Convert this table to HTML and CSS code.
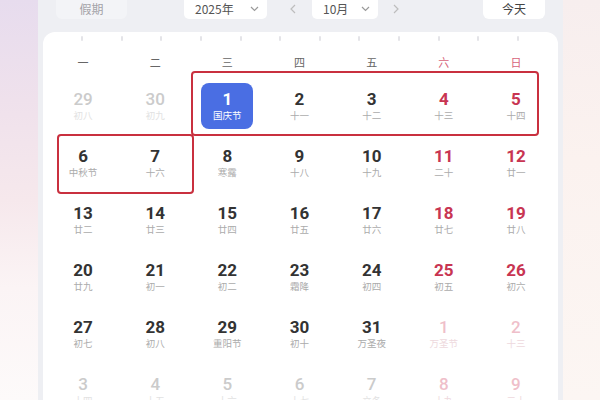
FILE: index.html
```html
<!DOCTYPE html>
<html lang="zh">
<head>
<meta charset="UTF-8">
<meta name="viewport" content="width=device-width, initial-scale=1.0">
<title>日历</title>
<link rel="stylesheet" href="styles.css">
</head>
<body>

<div class="page">
    <div class="side side-left"></div>

    <div class="panel">
        <div class="toolbar">
            <div class="tool-btn holiday">假期</div>
            <div class="select year-select">
                <span>2025年</span>
                <svg width="9" height="6" viewBox="0 0 9 6"><polyline points="1,1 4.5,4.5 8,1" fill="none" stroke="#9a9a9a" stroke-width="1.2"/></svg>
            </div>
            <div class="arrow arrow-prev">
                <svg width="6" height="10" viewBox="0 0 6 10"><polyline points="5,1 1,5 5,9" fill="none" stroke="#bdbdbd" stroke-width="1.2"/></svg>
            </div>
            <div class="select month-select">
                <span>10月</span>
                <svg width="9" height="6" viewBox="0 0 9 6"><polyline points="1,1 4.5,4.5 8,1" fill="none" stroke="#9a9a9a" stroke-width="1.2"/></svg>
            </div>
            <div class="arrow arrow-next">
                <svg width="6" height="10" viewBox="0 0 6 10"><polyline points="1,1 5,5 1,9" fill="none" stroke="#bdbdbd" stroke-width="1.2"/></svg>
            </div>
            <div class="tool-btn today">今天</div>
        </div>

        <div class="card">
            <div class="ticks" id="ticks"></div>
            <div class="week-head">
                <div>一</div>
                <div>二</div>
                <div>三</div>
                <div>四</div>
                <div>五</div>
                <div class="weekend">六</div>
                <div class="weekend">日</div>
            </div>
            <div class="days" id="days"></div>
        </div>
    </div>

    <div class="side side-right"></div>
</div>

<div class="mark mark-first"></div>
<div class="mark mark-second"></div>

<script>
    // [day, lunar, other month, holiday selected]
    let days = [
        [29, '初八', true], [30, '初九', true], [1, '国庆节', false, true], [2, '十一'], [3, '十二'], [4, '十三'], [5, '十四'],
        [6, '中秋节'], [7, '十六'], [8, '寒露'], [9, '十八'], [10, '十九'], [11, '二十'], [12, '廿一'],
        [13, '廿二'], [14, '廿三'], [15, '廿四'], [16, '廿五'], [17, '廿六'], [18, '廿七'], [19, '廿八'],
        [20, '廿九'], [21, '初一'], [22, '初二'], [23, '霜降'], [24, '初四'], [25, '初五'], [26, '初六'],
        [27, '初七'], [28, '初八'], [29, '重阳节'], [30, '初十'], [31, '万圣夜'], [1, '万圣节', true], [2, '十三', true],
        [3, '十四', true], [4, '十五', true], [5, '十六', true], [6, '十七', true], [7, '立冬', true], [8, '十九', true], [9, '二十', true]
    ];

    function show_days() {
        let box = document.getElementById('days');
        let html = '';
        for (let i = 0; i < days.length; i++) {
            let d = days[i];
            let cls = 'day';
            if (i % 7 >= 5) cls += ' weekend';
            if (d[2]) cls += ' other';
            if (d[3]) cls += ' selected';
            html += `
                <div class="${cls}">
                    <div class="day-inner">
                        <div class="num">${d[0]}</div>
                        <div class="lunar">${d[1]}</div>
                    </div>
                </div>`;
        }
        box.innerHTML = html;
    }

    function show_ticks() {
        let box = document.getElementById('ticks');
        for (let i = 0; i < 12; i++) {
            box.innerHTML += '<span class="tick"></span>';
        }
    }

    show_ticks();
    show_days();
</script>

</body>
</html>
```

FILE: styles.css
```css
body {
    margin: 0;
    padding: 0;
    font-family: "Noto Sans CJK SC", "Noto Sans", sans-serif;
    overflow: hidden;
}
.page {
    display: flex;
    width: 600px;
    height: 400px;
    overflow: hidden;
}
.side {
    height: 100%;
}
.side-left {
    width: 38px;
    background: linear-gradient(180deg, #e7dcee 0%, #efe1ec 25%, #f6e8ec 50%, #fbf4f5 72%, #fdfafa 100%);
}
.side-right {
    width: 37px;
    background: linear-gradient(180deg, #f7eeee 0%, #fbf2ef 40%, #fcf6f3 100%);
}
.panel {
    width: 525px;
    background-color: #eeeff3;
    display: flex;
    flex-direction: column;
}
.toolbar {
    height: 32px;
    flex-shrink: 0;
    display: flex;
    align-items: flex-start;
    padding: 0 18px;
    box-sizing: border-box;
}
.tool-btn {
    height: 19px;
    border-radius: 0 0 6px 6px;
    font-size: 12px;
    line-height: 17px;
    text-align: center;
}
.holiday {
    width: 71px;
    background-color: #f3f4f7;
    color: #a3a3a8;
}
.today {
    width: 62px;
    margin-left: auto;
    background-color: #ffffff;
    color: #444;
}
.select {
    height: 19px;
    background-color: #ffffff;
    border-radius: 0 0 5px 5px;
    display: flex;
    align-items: center;
    justify-content: space-between;
    padding: 0 8px 2px 11px;
    box-sizing: border-box;
    font-size: 12px;
    color: #555;
}
.year-select {
    width: 83px;
    margin-left: 57px;
}
.month-select {
    width: 66px;
    margin-left: 9px;
}
.arrow {
    width: 20px;
    height: 17px;
    display: flex;
    align-items: center;
    justify-content: center;
}
.arrow-prev {
    margin-left: 16px;
}
.arrow-next {
    margin-left: 8px;
}
.card {
    flex: 1;
    min-height: 0;
    overflow: hidden;
    margin: 0 5px;
    background-color: #ffffff;
    border-radius: 12px 12px 0 0;
}
.ticks {
    height: 15px;
    display: flex;
    justify-content: space-between;
    padding: 4px 39px 0 38px;
    box-sizing: border-box;
}
.tick {
    width: 2px;
    height: 5px;
    border-radius: 1px;
    background-color: #e4e4e8;
}
.week-head {
    height: 30px;
    display: grid;
    grid-template-columns: repeat(7, 1fr);
    margin: 0 6px 0 4px;
    align-items: center;
    text-align: center;
    font-size: 11px;
    color: #666;
}
.week-head .weekend {
    color: #d7637a;
}
.days {
    display: grid;
    grid-template-columns: repeat(7, 1fr);
    grid-auto-rows: 57px;
    margin: 0 6px 0 4px;
}
.day {
    display: flex;
    align-items: center;
    justify-content: center;
}
.day-inner {
    text-align: center;
}
.num {
    font-family: Roboto, "DejaVu Sans", sans-serif;
    font-weight: 700;
    font-size: 17px;
    line-height: 20px;
    color: #333;
}
.lunar {
    font-size: 9.5px;
    line-height: 13px;
    color: #ababab;
}
.day.weekend .num {
    color: #c83552;
}
.day.other .num {
    color: #cbcbcb;
    font-weight: 500;
}
.day.other .lunar {
    color: #e2e2e2;
}
.day.weekend.other .num {
    color: #efbfca;
}
.day.weekend.other .lunar {
    color: #eed9dd;
}
.day.selected .day-inner {
    width: 52px;
    height: 46px;
    border-radius: 8px;
    background-color: #4a6ee3;
    display: flex;
    flex-direction: column;
    justify-content: center;
}
.day.selected .num,
.day.selected .lunar {
    color: #ffffff;
}
.mark {
    position: absolute;
    border: 2px solid #c9303f;
    border-radius: 4px;
    box-sizing: border-box;
}
.mark-first {
    left: 191px;
    top: 71px;
    width: 348px;
    height: 65px;
}
.mark-second {
    left: 57px;
    top: 134px;
    width: 137px;
    height: 60px;
}
```
